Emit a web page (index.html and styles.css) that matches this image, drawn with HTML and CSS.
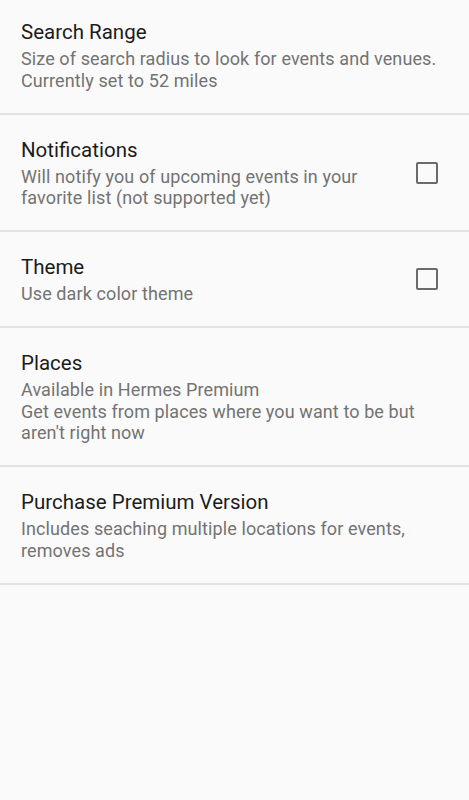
FILE: index.html
```html
<!DOCTYPE html>
<html lang="en">
<head>
<meta charset="UTF-8">
<meta name="viewport" content="width=device-width, initial-scale=1.0">
<title>Settings</title>
<link rel="stylesheet" href="styles.css">
</head>
<body>
<div class="prefs">
  <div class="pref">
    <div class="pref-text">
      <div class="pref-title">Search Range</div>
      <div class="pref-summary">Size of search radius to look for events and venues. Currently set to 52 miles</div>
    </div>
  </div>
  <div class="pref">
    <div class="pref-text">
      <div class="pref-title">Notifications</div>
      <div class="pref-summary">Will notify you of upcoming events in your favorite list (not supported yet)</div>
    </div>
    <div class="check"></div>
  </div>
  <div class="pref">
    <div class="pref-text">
      <div class="pref-title">Theme</div>
      <div class="pref-summary">Use dark color theme</div>
    </div>
    <div class="check"></div>
  </div>
  <div class="pref">
    <div class="pref-text">
      <div class="pref-title">Places</div>
      <div class="pref-summary">Available in Hermes Premium<br>Get events from places where you want to be but aren't right now</div>
    </div>
  </div>
  <div class="pref">
    <div class="pref-text">
      <div class="pref-title">Purchase Premium Version</div>
      <div class="pref-summary">Includes seaching multiple locations for events, removes ads</div>
    </div>
  </div>
</div>
</body>
</html>
```

FILE: styles.css
```css
body {
    margin: 0;
    background-color: #fafafa;
    font-family: Roboto, "Noto Sans", sans-serif;
}
.prefs {
    display: flex;
    flex-direction: column;
}
.pref {
    display: flex;
    align-items: center;
    padding: 22px 31px 21.5px 21px;
    border-bottom: 2px solid #e2e2e2;
}
.pref:first-child {
    padding-top: 19px;
}
.pref-text {
    flex: 1;
}
.pref-title {
    font-size: 20.5px;
    line-height: 26px;
    color: #1c1c1c;
}
.pref-summary {
    margin-top: 3px;
    font-size: 18px;
    line-height: 21.5px;
    letter-spacing: 0.1px;
    color: #737373;
}
.check {
    width: 18px;
    height: 18px;
    border: 2px solid #6b6b6b;
    border-radius: 2px;
    margin-left: 30px;
    flex-shrink: 0;
}
```
